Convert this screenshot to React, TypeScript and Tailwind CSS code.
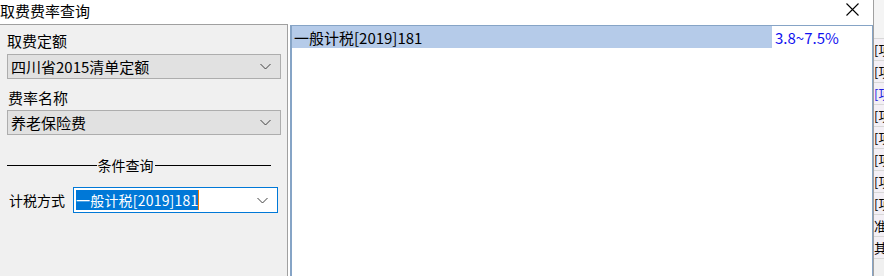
import React from "react";

const font = { fontFamily: '"Microsoft YaHei", "Noto Sans CJK SC", sans-serif' };

const Chevron = () => (
	<svg width="11" height="7" viewBox="0 0 11 7" className="shrink-0">
		<path d="M0.5 1 L5.5 6 L10.5 1" fill="none" stroke="#404040" strokeWidth="1" />
	</svg>
);

const Select = ({ value }: { value: string }) => (
	<div className="flex items-center justify-between h-[25px] bg-[#e1e1e1] border border-[#adadad] pl-[3px] pr-[9px] text-[15px] text-black leading-none">
		<span>{value}</span>
		<Chevron />
	</div>
);

const stripRows = [
	{ text: "[项", blue: false },
	{ text: "[项", blue: false },
	{ text: "[项", blue: true },
	{ text: "[项", blue: false },
	{ text: "[项", blue: false },
	{ text: "[项", blue: false },
	{ text: "[项", blue: false },
	{ text: "[项", blue: false },
	{ text: "准", blue: false },
	{ text: "其", blue: false },
];

export default function App() {
	return (
		<div className="flex w-[884px] h-[276px] overflow-hidden bg-white" style={font}>
			<div className="flex flex-col w-[873px]">
				<div className="flex items-center justify-between h-[24px] bg-white">
					<span className="text-[15px] text-black leading-none -mt-[3px]">取费费率查询</span>
					<svg width="13" height="13" viewBox="0 0 13 13" className="mr-[14px] -mt-[6px]">
						<path d="M0.5 0.5 L12.5 12.5 M12.5 0.5 L0.5 12.5" stroke="#000" strokeWidth="1.1" />
					</svg>
				</div>
				<div className="flex flex-1">
					<div className="w-[288px] bg-[#f0f0f0] border-t border-r border-[#a0a0a0] pl-[7px] pr-[6px] pt-[8px]">
						<div className="text-[15px] leading-none h-[21px]">取费定额</div>
						<Select value="四川省2015清单定额" />
						<div className="text-[15px] leading-none mt-[11px] h-[20px] pl-[1px]">费率名称</div>
						<Select value="养老保险费" />
						<div className="flex items-center mt-[23px] pr-[10px]">
							<div className="h-px flex-1 bg-black" />
							<span className="text-[14px] leading-none px-[1px]">条件查询</span>
							<div className="h-px flex-[1.3] bg-black" />
						</div>
						<div className="flex items-center mt-[15px]">
							<span className="text-[14px] leading-none pl-[2px] w-[66px]">计税方式</span>
							<div className="flex items-center justify-between w-[205px] h-[26px] bg-white border border-[#0078d7] pl-[2px] pr-[9px]">
								<span className="flex items-center">
									<span className="bg-[#0078d7] text-white text-[14px] leading-[20px] tracking-[0.2px]">一般计税[2019]181</span>
									<span className="w-[1px] h-[20px] bg-[#f07800]" />
								</span>
								<Chevron />
							</div>
						</div>
					</div>
					<div className="flex-1 ml-[2px] mt-[1px] bg-white border-l-2 border-t border-r border-[#86a4c6]">
						<div className="flex h-[22px] items-center">
							<div className="w-[480px] h-full bg-[#b5cbe9] flex items-center pl-[2px] text-[15px] leading-none text-black">
								一般计税[2019]181
							</div>
							<span className="pl-[3px] text-[15px] leading-none text-[#1010f0]">3.8~7.5%</span>
						</div>
					</div>
				</div>
			</div>
			<div className="w-[11px] flex flex-col border-l border-[#a0a0a0] bg-[#f0f0f0]">
				<div className="h-[39px] shrink-0 bg-[#f4f4f4] border-b border-[#d8d8d8]" />
				{stripRows.map((r, i) => (
					<div
						key={i}
						className={`h-[22px] shrink-0 flex items-center whitespace-nowrap border-b border-[#d8d8d8] bg-[#f3eff5] text-[13px] leading-none ${r.blue ? "text-[#2020e0]" : "text-black"}`}
						style={{ fontFamily: '"Noto Sans CJK SC", sans-serif' }}
					>
						{r.text}
					</div>
				))}
			</div>
		</div>
	);
}
